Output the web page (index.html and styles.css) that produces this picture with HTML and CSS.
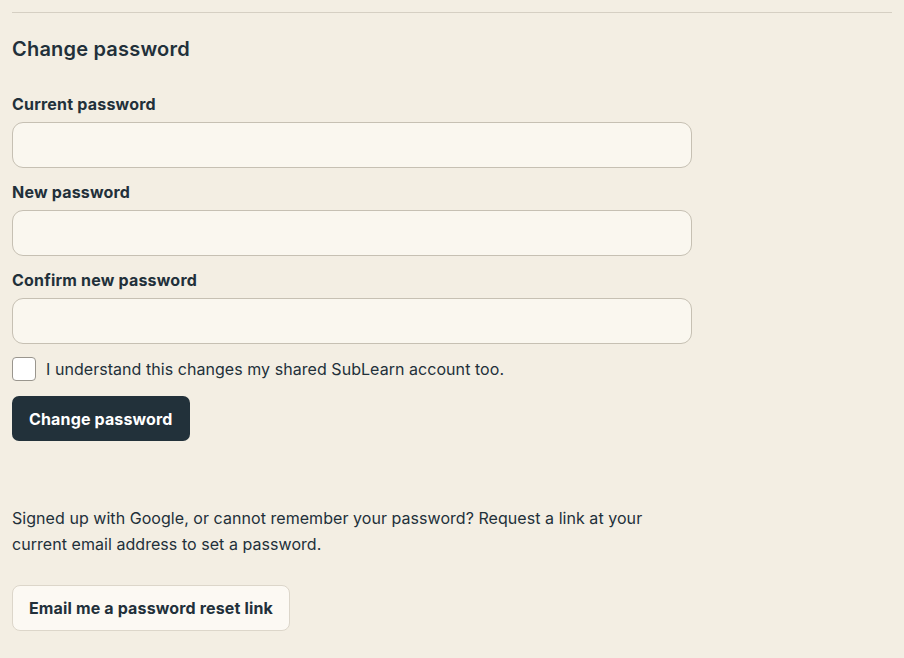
FILE: index.html
```html
<!DOCTYPE html>
<html lang="en">
<head>
<meta charset="utf-8">
<title>Change password</title>
<link rel="stylesheet" href="styles.css">
</head>
<body>
<section class="section">
  <h2 class="title">Change password</h2>
  <form class="form">
    <div class="field">
      <label class="label" for="cur">Current password</label>
      <input class="input" id="cur" type="password">
    </div>
    <div class="field">
      <label class="label" for="new">New password</label>
      <input class="input" id="new" type="password">
    </div>
    <div class="field">
      <label class="label" for="conf">Confirm new password</label>
      <input class="input" id="conf" type="password">
    </div>
    <label class="check">
      <span class="box"></span>
      <span>I understand this changes my shared SubLearn account too.</span>
    </label>
    <button class="btn-primary" type="button">Change password</button>
  </form>
  <p class="note">Signed up with Google, or cannot remember your password? Request a link at your current email address to set a password.</p>
  <button class="btn-secondary" type="button">Email me a password reset link</button>
</section>
</body>
</html>
```
FILE: styles.css
```css
html, body {
  margin: 0;
  padding: 0;
  background: #f3eee3;
}
body {
  font-family: Inter, "Noto Sans", sans-serif;
  color: #22303a;
  padding: 12px 12px 0 12px;
}
.section {
  border-top: 1px solid #d5cfc3;
}
.title {
  margin: 22px 0 0 0;
  font-size: 20px;
  line-height: 28px;
  font-weight: 600;
  letter-spacing: 0.2px;
}
.form {
  display: flex;
  flex-direction: column;
  margin-top: 30px;
}
.field {
  display: flex;
  flex-direction: column;
  gap: 7px;
  margin-bottom: 13px;
}
.label {
  font-size: 16px;
  line-height: 22px;
  font-weight: 700;
  letter-spacing: 0.2px;
}
.input {
  box-sizing: border-box;
  width: 680px;
  height: 46px;
  margin: 0;
  border: 1px solid #c6c0b3;
  border-radius: 11px;
  background: #faf7ef;
  font: inherit;
}
.check {
  display: flex;
  align-items: center;
  gap: 10px;
  margin-top: 0;
  font-size: 16px;
  line-height: 24px;
  letter-spacing: 0.05px;
}
.box {
  box-sizing: border-box;
  width: 24px;
  height: 24px;
  border: 1px solid #9a968e;
  border-radius: 4px;
  background: #ffffff;
}
.btn-primary {
  align-self: flex-start;
  margin-top: 15px;
  height: 45px;
  padding: 0 17px;
  border: none;
  border-radius: 7px;
  background: #22313a;
  color: #ffffff;
  font-family: inherit;
  font-size: 16px;
  font-weight: 700;
  letter-spacing: 0.15px;
}
.note {
  margin: 64px 0 0 0;
  width: 680px;
  font-size: 16px;
  line-height: 26px;
  letter-spacing: 0.05px;
}
.btn-secondary {
  display: block;
  margin-top: 28px;
  height: 46px;
  padding: 0 16px;
  border: 1px solid #dcd6ca;
  border-radius: 8px;
  background: #fcf9f3;
  color: #22303a;
  font-family: inherit;
  font-size: 16px;
  font-weight: 700;
  letter-spacing: 0.15px;
}
```
